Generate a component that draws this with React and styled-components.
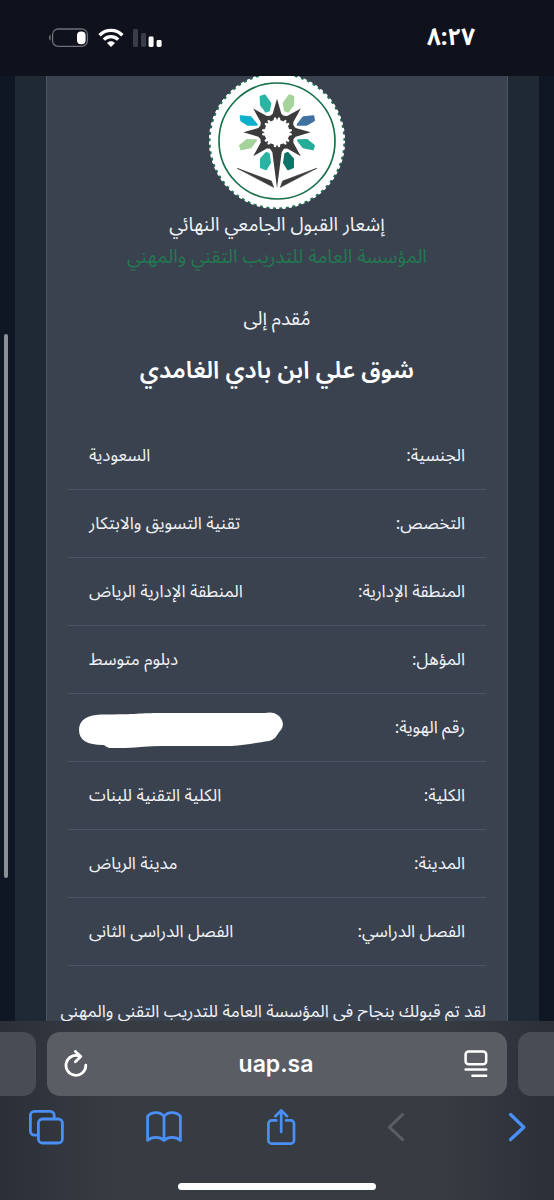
import React from 'react';
import styled, { createGlobalStyle } from 'styled-components';

const details = [
  { label: 'الجنسية:', value: 'السعودية' },
  { label: 'التخصص:', value: 'تقنية التسويق والابتكار' },
  { label: 'المنطقة الإدارية:', value: 'المنطقة الإدارية الرياض' },
  { label: 'المؤهل:', value: 'دبلوم متوسط' },
  { label: 'رقم الهوية:', hidden: true },
  { label: 'الكلية:', value: 'الكلية التقنية للبنات' },
  { label: 'المدينة:', value: 'مدينة الرياض' },
  { label: 'الفصل الدراسي:', value: 'الفصل الدراسى الثانى' },
];

const RAYS = [0, 45, 90, 135, 225, 270, 315];

const Battery = () => (
  <svg width="41" height="20" viewBox="0 0 41 20" fill="none">
    <rect x="4.6" y="1" width="34.8" height="17.4" rx="5.6" stroke="#6d7078" strokeWidth="1.3" />
    <path d="M2.6 6.8C.4 7.6.4 11.8 2.6 12.6Z" fill="#6d7078" />
    <rect x="29" y="3.4" width="8.6" height="12.8" rx="4" fill="#fff" />
  </svg>
);

const Wifi = () => (
  <svg width="26" height="20" viewBox="0 0 26 20" fill="none" stroke="#fff" strokeWidth="3.4">
    <path d="M1.6 7.2C8 .8 18 .8 24.4 7.2" />
    <path d="M5.8 11.6C9.8 7.6 16.2 7.6 20.2 11.6" />
    <path d="M13 19 9 14.9C11.3 12.8 14.7 12.8 17 14.9Z" fill="#fff" stroke="none" />
  </svg>
);

const Signal = () => (
  <svg width="29" height="20" viewBox="0 0 29 20">
    <rect x="0" y="1" width="5" height="18" rx="1.4" fill="#3a3d47" />
    <rect x="8" y="5" width="5" height="14" rx="1.4" fill="#3a3d47" />
    <rect x="15.6" y="8.4" width="5" height="10.6" rx="1.4" fill="#fff" />
    <rect x="23.6" y="12" width="5" height="7" rx="1.4" fill="#fff" />
  </svg>
);

const Emblem = () => (
  <SealSvg viewBox="27 8 408 408" role="img" aria-label="شعار المؤسسة">
    <circle cx="231" cy="212" r="201" fill="#fff" />
    <circle
      cx="231"
      cy="212"
      r="201"
      fill="none"
      stroke="#fff"
      strokeWidth="7"
      strokeLinecap="round"
      strokeDasharray="5 14.43"
    />
    <circle
      cx="231"
      cy="212"
      r="201.5"
      fill="none"
      stroke="#1f7a56"
      strokeWidth="4.5"
      strokeDasharray="8 11.48"
      strokeDashoffset="11"
    />
    <circle cx="231" cy="212" r="174" fill="none" stroke="#17704a" strokeWidth="5" />
    <g strokeWidth="6" strokeLinejoin="round">
      <path d="M182 79 194 75 211 99 207 120 198 124 183 104Z" fill="#2bb3a3" stroke="#2bb3a3" />
      <path d="M280 79 268 75 251 99 255 120 264 124 279 104Z" fill="#a5d39b" stroke="#a5d39b" />
      <path d="M122 138 152 141 170 163 143 163 124 151Z" fill="#0eb0cb" stroke="#0eb0cb" />
      <path d="M340 138 310 141 293 163 320 163 342 150Z" fill="#3f72a1" stroke="#3f72a1" />
      <path d="M120 226 141 209 168 210 152 231 124 237Z" fill="#a5d39b" stroke="#a5d39b" />
      <path d="M342 226 321 209 294 210 310 231 338 237Z" fill="#24ad98" stroke="#24ad98" />
      <path d="M183 266 199 248 206 251 210 277 198 297 183 291Z" fill="#2bb3a3" stroke="#2bb3a3" />
      <path d="M279 266 263 248 256 251 252 277 264 297 279 291Z" fill="#0d7467" stroke="#0d7467" />
    </g>
    <g fill="#3b3b3c" transform="translate(231 186)">
      {RAYS.map((deg) => (
        <path
          key={deg}
          transform={`rotate(${deg})`}
          d="M0-101 13-56 21-49 17-35 10-36 9-44 4-45 0-37-4-45-9-44-10-36-17-35-21-49-13-56Z"
        />
      ))}
      <path d="M0 167 14 60 21 49 17 35 10 36 9 44 4 45 0 37-4 45-9 44-10 36-17 35-21 49-14 60Z" />
    </g>
    <path d="M112 294 214 332 221 351Z" fill="#3b3b3c" stroke="#3b3b3c" strokeWidth="2" />
    <path d="M350 294 248 332 241 351Z" fill="#3b3b3c" stroke="#3b3b3c" strokeWidth="2" />
  </SealSvg>
);

const Scribble = () => (
  <ScribbleSvg viewBox="0 0 204 36" aria-label="مخفي">
    <path
      d="M0 18C0 8 8 3 22 2.5 60 2.5 60 1 82 1H186C190 0 196 0 200 4 205 9 205 15 201 19 197 24 197 27 190 29 176 31 166 33 152 34H82C66 34 48 37 30 36 27 35 26 33 24 33 8 33 0 28 0 18Z"
      fill="#fff"
    />
  </ScribbleSvg>
);

const App = () => {
  return (
    <>
      <GlobalStyle />
      <Screen>
        <StatusBar>
          <StatusIcons>
            <Battery />
            <Wifi />
            <Signal />
          </StatusIcons>
          <Clock>٨:٢٧</Clock>
        </StatusBar>

        <Page dir="rtl" lang="ar">
          <Panel>
            <Card>
              <Emblem />
              <Heading>إشعار القبول الجامعي النهائي</Heading>
              <Organization>المؤسسة العامة للتدريب التقني والمهني</Organization>
              <PresentedTo>مُقدم إلى</PresentedTo>
              <StudentName>شوق علي ابن بادي الغامدي</StudentName>
              <Details>
                {details.map((item) => (
                  <DetailRow key={item.label}>
                    <dt>{item.label}</dt>
                    <dd>{item.hidden ? <Scribble /> : item.value}</dd>
                  </DetailRow>
                ))}
              </Details>
              <Message>لقد تم قبولك بنجاح فى المؤسسة العامة للتدريب التقنى والمهنى</Message>
            </Card>
          </Panel>
          <ScrollThumb />
        </Page>

        <BrowserBar>
          <Tabs>
            <SideTab $side="left" />
            <AddressBar>
              <IconButton aria-label="Reload">
                <svg width="24" height="28" viewBox="0 0 24 28" fill="none" stroke="#fff" strokeWidth="2.8" strokeLinecap="round" strokeLinejoin="round">
                  <path d="M21.8 15.2A9.9 9.9 0 1 1 15.6 6.2" />
                  <path d="M11.4 1.4 16.8 6.6 11.4 11.8" />
                </svg>
              </IconButton>
              <Domain>uap.sa</Domain>
              <IconButton aria-label="Page menu">
                <svg width="24" height="28" viewBox="0 0 24 28" fill="none" stroke="#fff" strokeWidth="2.5" strokeLinecap="round">
                  <rect x="1.6" y="1.6" width="20.6" height="12.6" rx="3" />
                  <path d="M1.6 19.6H22.2M8.4 25.8H22.2" />
                </svg>
              </IconButton>
            </AddressBar>
            <SideTab $side="right" />
          </Tabs>

          <Toolbar>
            <IconButton aria-label="Tabs">
              <svg width="36" height="36" viewBox="0 0 36 36" fill="none" stroke="#4a8ff5" strokeWidth="2.8">
                <path d="M9.8 26.2H6.4A4 4 0 0 1 2.4 22.2V6.4A4 4 0 0 1 6.4 2.4H22.2A4 4 0 0 1 26.2 6.4V9.6" />
                <rect x="10.4" y="10" width="24" height="24" rx="4" />
              </svg>
            </IconButton>
            <IconButton aria-label="Bookmarks">
              <svg width="36" height="36" viewBox="0 0 36 36" fill="none" stroke="#4a8ff5" strokeWidth="2.8" strokeLinejoin="round">
                <path d="M18 7.4C14 2.4 6 2.4 1.6 7.2V31.4C6 27.4 14 27.6 18 31.4 22 27.6 30 27.4 34.4 31.4V7.2C30 2.4 22 2.4 18 7.4ZM18 7.4V31.4" />
              </svg>
            </IconButton>
            <IconButton aria-label="Share">
              <svg width="36" height="36" viewBox="0 0 36 36" fill="none" stroke="#4a8ff5" strokeWidth="2.7" strokeLinecap="round" strokeLinejoin="round">
                <path d="M12.4 11.4H7.6A3.2 3.2 0 0 0 4.4 14.6V31.4A3.2 3.2 0 0 0 7.6 34.6H26.8A3.2 3.2 0 0 0 30 31.4V14.6A3.2 3.2 0 0 0 26.8 11.4H22" />
                <path d="M17.2 23V1.6M11.4 7.2 17.2 1.4 23 7.2" />
              </svg>
            </IconButton>
            <IconButton aria-label="Back" disabled>
              <svg width="36" height="36" viewBox="0 0 36 36" fill="none" stroke="#595d64" strokeWidth="3" strokeLinecap="round" strokeLinejoin="round">
                <path d="M21.6 5.6 8.4 18.2 21.6 30.6" />
              </svg>
            </IconButton>
            <IconButton aria-label="Forward">
              <svg width="36" height="36" viewBox="0 0 36 36" fill="none" stroke="#4a8ff5" strokeWidth="3.4" strokeLinecap="round" strokeLinejoin="round">
                <path d="M11.6 5.6 24.8 18.2 11.6 30.6" />
              </svg>
            </IconButton>
          </Toolbar>
          <HomeIndicator />
        </BrowserBar>
      </Screen>
    </>
  );
};

const GlobalStyle = createGlobalStyle`
  * {
    box-sizing: border-box;
  }

  body {
    margin: 0;
    background-color: #0f121c;
    color: #f1f3f6;
    font-family: 'Noto Sans Arabic', 'DejaVu Sans Condensed', sans-serif;
  }

  svg {
    display: block;
    flex-shrink: 0;
  }
`;

const Screen = styled.div`
  display: flex;
  flex-direction: column;
  height: 100vh;
`;

const StatusBar = styled.header`
  display: flex;
  flex-shrink: 0;
  align-items: center;
  justify-content: space-between;
  height: 76px;
  padding: 0 79px 0 48px;
  background-color: #0f121c;
`;

const StatusIcons = styled.div`
  display: flex;
  gap: 9px;
`;

const Clock = styled.time`
  color: #fff;
  font-size: 24px;
  font-weight: 700;
  line-height: 32px;
`;

const Page = styled.main`
  position: relative;
  flex: 1;
  min-height: 0;
  padding: 0 15px;
  overflow: hidden;
  background-color: #101724;
`;

const Panel = styled.div`
  height: 100%;
  padding: 0 31px;
  background-color: #1e2934;
`;

const Card = styled.article`
  display: flow-root;
  height: 100%;
  padding: 0 21px;
  background-color: #3a4250;
  border: solid #4b5563;
  border-width: 0 1px;
  text-align: center;
`;

const SealSvg = styled.svg`
  width: 136px;
  height: 136px;
  margin: -3px auto 0;
`;

const Heading = styled.h1`
  margin: 0;
  font-size: 19px;
  font-weight: 400;
  line-height: 32px;
`;

const Organization = styled.h2`
  margin: 0;
  color: #23784f;
  font-size: 19px;
  font-weight: 400;
  line-height: 32px;
`;

const PresentedTo = styled.p`
  margin: 30px 0 0;
  font-size: 19px;
  line-height: 32px;
`;

const StudentName = styled.p`
  margin: 16px 0 0;
  color: #fff;
  font-size: 24px;
  font-weight: 600;
  line-height: 40px;
`;

const Details = styled.dl`
  margin: 31px 0 0;
`;

const DetailRow = styled.div`
  display: flex;
  align-items: center;
  justify-content: space-between;
  height: 68px;
  padding: 0 21px;
  border-bottom: 1px solid #4b5563;
  font-size: 17px;
  line-height: 28px;

  dd {
    margin: 0;
  }
`;

const ScribbleSvg = styled.svg`
  width: 204px;
  height: 36px;
  margin-top: 4px;
  margin-inline-end: -10px;
`;

const Message = styled.p`
  margin: 32px 0 0;
  font-size: 17px;
  line-height: 28px;
  text-align: start;
  white-space: nowrap;
`;

const ScrollThumb = styled.div`
  position: absolute;
  top: 258px;
  left: 4px;
  width: 4px;
  height: 544px;
  background-color: #8a9095;
  border-radius: 2px;
`;

const BrowserBar = styled.footer`
  flex-shrink: 0;
  padding: 11px 0 10px;
  background: linear-gradient(90deg, #2b2f37, #373b42 20%, #373b42 80%, #2b2f37);
`;

const Tabs = styled.div`
  display: flex;
  gap: 11px;
  height: 64px;
`;

const SideTab = styled.div`
  width: 36px;
  background-color: #484c54;
  border-radius: ${(props) => (props.$side === 'left' ? '0 13px 13px 0' : '13px 0 0 13px')};
`;

const AddressBar = styled.div`
  display: flex;
  flex: 1;
  align-items: center;
  justify-content: space-between;
  padding: 0 19px 0 17px;
  background-color: #5a5d64;
  border-radius: 13px;
`;

const Domain = styled.button`
  padding: 0;
  background: none;
  border: 0;
  color: #fff;
  font-family: Inter, sans-serif;
  font-size: 23px;
  font-weight: 600;
  line-height: 32px;
`;

const IconButton = styled.button`
  padding: 0;
  background: none;
  border: 0;
  cursor: pointer;

  &:disabled {
    cursor: default;
  }
`;

const Toolbar = styled.nav`
  display: flex;
  align-items: center;
  justify-content: space-between;
  height: 62px;
  padding: 0 19px 0 28px;
`;

const HomeIndicator = styled.div`
  width: 198px;
  height: 7px;
  margin: 25px auto 0;
  background-color: #fff;
  border-radius: 4px;
`;

export default App;
